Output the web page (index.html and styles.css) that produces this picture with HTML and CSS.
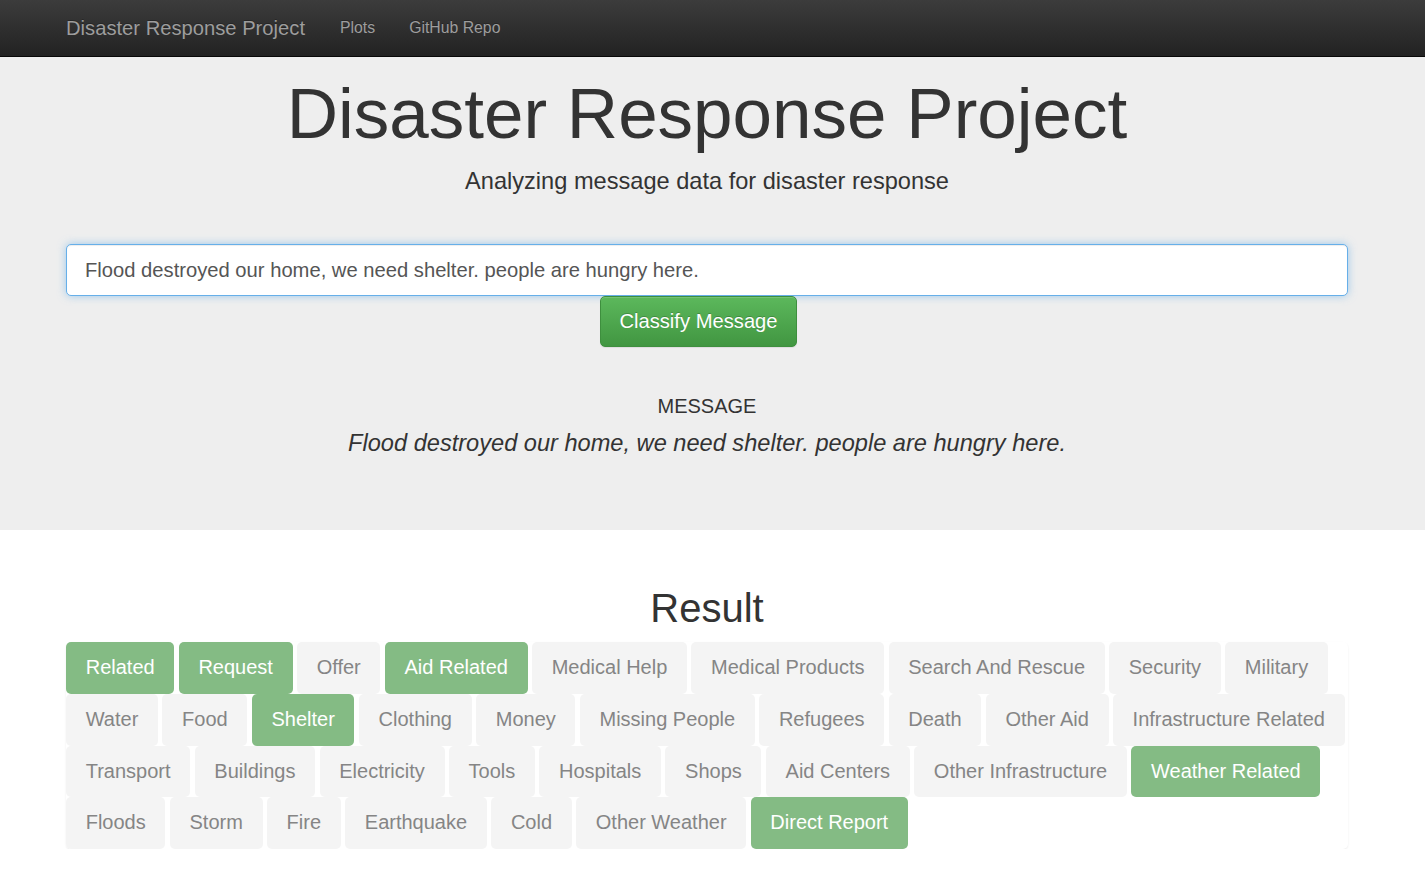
FILE: index.html
```html
<!DOCTYPE html>
<html lang="en">
<head>
<meta charset="utf-8">
<title>Disaster Response Project</title>
<link rel="stylesheet" href="styles.css">
</head>
<body>
<nav class="navbar">
  <div class="wrap nav-inner">
    <a class="brand" href="#">Disaster Response Project</a>
    <a class="nav-link" href="#">Plots</a>
    <a class="nav-link" href="#">GitHub Repo</a>
  </div>
</nav>
<header class="jumbotron">
  <div class="wrap">
    <h1 class="title">Disaster Response Project</h1>
    <p class="subtitle">Analyzing message data for disaster response</p>
    <form class="form">
      <input class="input" type="text" value="Flood destroyed our home, we need shelter. people are hungry here.">
      <div class="btn-row"><button type="button" class="btn">Classify Message</button></div>
    </form>
    <h4 class="msg-label">MESSAGE</h4>
    <p class="msg-text">Flood destroyed our home, we need shelter. people are hungry here.</p>
  </div>
</header>
<main class="wrap">
  <h2 class="result">Result</h2>
  <ul class="list">
    <li class="item on">Related</li>
    <li class="item on">Request</li>
    <li class="item">Offer</li>
    <li class="item on">Aid Related</li>
    <li class="item">Medical Help</li>
    <li class="item">Medical Products</li>
    <li class="item">Search And Rescue</li>
    <li class="item">Security</li>
    <li class="item">Military</li>
    <li class="item">Water</li>
    <li class="item">Food</li>
    <li class="item on">Shelter</li>
    <li class="item">Clothing</li>
    <li class="item">Money</li>
    <li class="item">Missing People</li>
    <li class="item">Refugees</li>
    <li class="item">Death</li>
    <li class="item">Other Aid</li>
    <li class="item">Infrastructure Related</li>
    <li class="item">Transport</li>
    <li class="item">Buildings</li>
    <li class="item">Electricity</li>
    <li class="item">Tools</li>
    <li class="item">Hospitals</li>
    <li class="item">Shops</li>
    <li class="item">Aid Centers</li>
    <li class="item">Other Infrastructure</li>
    <li class="item on">Weather Related</li>
    <li class="item">Floods</li>
    <li class="item">Storm</li>
    <li class="item">Fire</li>
    <li class="item">Earthquake</li>
    <li class="item">Cold</li>
    <li class="item">Other Weather</li>
    <li class="item on">Direct Report</li>
  </ul>
</main>
</body>
</html>
```
FILE: styles.css
```css
* { box-sizing: border-box; }
html, body { margin: 0; padding: 0; }
body {
  font-family: "Liberation Sans", Arial, Helvetica, sans-serif;
  color: #333;
  background: #fff;
}
.wrap {
  margin-left: 66px;
  width: 1282px;
}
.navbar {
  height: 57px;
  background: linear-gradient(to bottom, #3c3c3c 0%, #222 100%);
  border-bottom: 1px solid #080808;
}
.nav-inner {
  display: flex;
  align-items: center;
  height: 56px;
}
.brand {
  font-size: 20.2px;
  color: #9d9d9d;
  text-decoration: none;
  text-shadow: 0 -1px 0 rgba(0,0,0,.25);
  margin-right: 35px;
}
.nav-link {
  font-size: 15.8px;
  color: #9d9d9d;
  text-decoration: none;
  text-shadow: 0 -1px 0 rgba(0,0,0,.25);
  margin-right: 34px;
}
.jumbotron {
  background: #eee;
  height: 473px;
  padding-top: 18px;
}
.title {
  margin: 0;
  font-size: 71px;
  font-weight: 400;
  line-height: 78px;
  text-align: center;
}
.subtitle {
  margin: 12px 0 0;
  font-size: 23.6px;
  line-height: 32px;
  text-align: center;
}
.form { margin-top: 47px; }
.input {
  display: block;
  width: 100%;
  height: 52px;
  padding: 0 18px;
  font-family: inherit;
  font-size: 20.2px;
  color: #555;
  background: #fff;
  border: 1px solid #66afe9;
  border-radius: 5px;
  outline: none;
  box-shadow: inset 0 1px 1px rgba(0,0,0,.075), 0 0 8px rgba(102,175,233,.6);
}
.btn-row { padding-left: 534px; }
.btn {
  display: block;
  width: 197px;
  height: 51px;
  padding: 0;
  font-family: inherit;
  font-size: 20.2px;
  color: #fff;
  background: linear-gradient(to bottom, #5cb85c 0%, #419641 100%);
  border: 1px solid #3e8f3e;
  border-radius: 5px;
  text-shadow: 0 -1px 0 rgba(0,0,0,.2);
  box-shadow: inset 0 1px 0 rgba(255,255,255,.15), 0 1px 1px rgba(0,0,0,.075);
}
.msg-label {
  margin: 48px 0 0;
  font-size: 20px;
  font-weight: 400;
  line-height: 22px;
  text-align: center;
}
.msg-text {
  margin: 13px 0 0;
  font-size: 23.6px;
  font-style: italic;
  line-height: 26px;
  text-align: center;
}
.result {
  margin: 56px 0 12px;
  font-size: 40px;
  font-weight: 400;
  line-height: 44px;
  text-align: center;
}
.list {
  list-style: none;
  margin: 0;
  padding: 0;
  display: flex;
  flex-wrap: wrap;
  column-gap: 4.4px;
  border-radius: 5px;
  box-shadow: 0 1px 2px rgba(0,0,0,.075);
}
.item {
  font-size: 20px;
  line-height: 27.75px;
  padding: 11px 18.7px;
  border: 1px solid transparent;
  border-radius: 5px;
  background: #f4f4f4;
  color: #858585;
  white-space: nowrap;
}
.item.on {
  background: #84bb84;
  color: #fff;
}
```
